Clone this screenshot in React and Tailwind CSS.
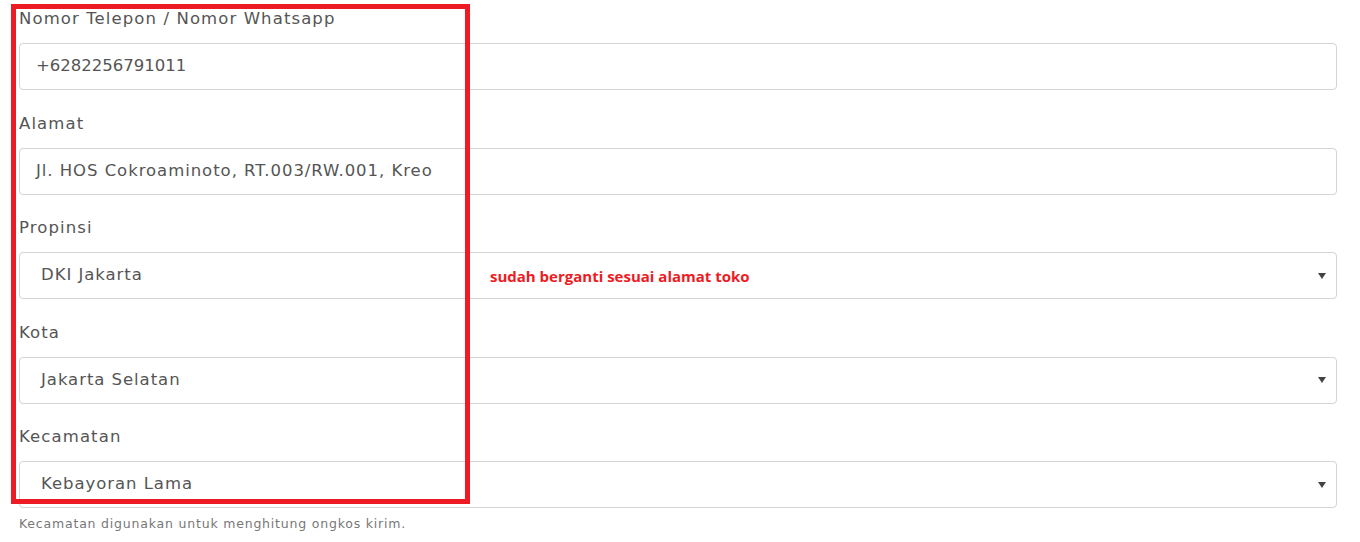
import React from 'react';

const font = { fontFamily: '"DejaVu Sans", "Noto Sans", sans-serif' };

const Caret = () => (
  <svg width="8" height="7" viewBox="0 0 8 7" className="absolute right-[10px] top-1/2 -translate-y-1/2">
    <path d="M0 0.5h8L4 6.5z" fill="#444" />
  </svg>
);

const Field = ({ label, value, select, numeric, hint }) => (
  <div className="flex flex-col">
    <label className="h-6 leading-6 text-[16.5px] tracking-[1.1px] text-[#555] mb-3">{label}</label>
    <div className="relative h-[47px] border border-[#d3d3d8] rounded-[4px] bg-white flex items-center">
      <span
        className={`text-[16.5px] text-[#555] ${numeric ? '' : 'tracking-[0.95px]'} ${select ? 'pl-[21px]' : 'pl-4'}`}
      >
        {value}
      </span>
      {select && <Caret />}
    </div>
    {hint && <p className="mt-[7px] text-[12.5px] tracking-[0.8px] text-[#777]">{hint}</p>}
  </div>
);

export default function App() {
  return (
    <div className="relative w-[1360px] h-[542px] bg-white overflow-hidden" style={font}>
      <div className="flex flex-col gap-[21.5px] pl-[19px] pr-[23px] pt-[7px]">
        <Field label="Nomor Telepon / Nomor Whatsapp" value="+6282256791011" numeric />
        <Field label="Alamat" value="Jl. HOS Cokroaminoto, RT.003/RW.001, Kreo" />
        <Field label="Propinsi" value="DKI Jakarta" select />
        <Field label="Kota" value="Jakarta Selatan" select />
        <Field
          label="Kecamatan"
          value="Kebayoran Lama"
          select
          hint="Kecamatan digunakan untuk menghitung ongkos kirim."
        />
      </div>

      {/* annotation overlay */}
      <div className="absolute left-[11px] top-[4px] w-[459px] h-[500px] border-[5px] border-[#ed1c24] pointer-events-none" />
      <span
        className="absolute left-[490px] top-[265px] text-[15px] font-bold text-[#ed1c24]"
        style={{ fontFamily: '"Open Sans", sans-serif' }}
      >
        sudah berganti sesuai alamat toko
      </span>
    </div>
  );
}
